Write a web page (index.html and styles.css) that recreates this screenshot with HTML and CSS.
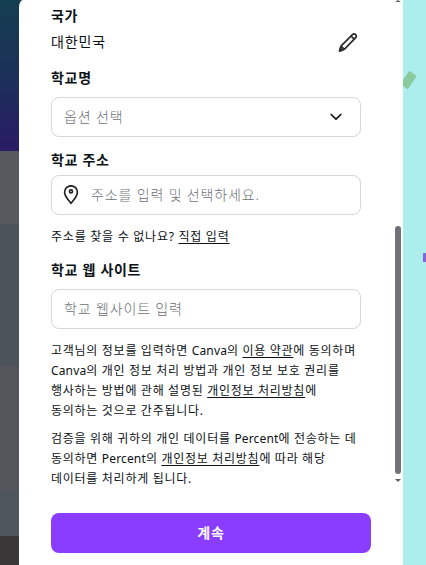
FILE: index.html
```html
<!DOCTYPE html>
<html lang="ko">
<head>
    <meta charset="UTF-8">
    <meta name="viewport" content="width=device-width, initial-scale=1.0">
    <title>학교 정보 입력</title>
    <link rel="stylesheet" href="styles.css">
</head>
<body>
    <div class="backdrop-left"></div>
    <main class="modal">
        <form class="form">
            <div class="label">국가</div>
            <div class="country">
                <span>대한민국</span>
                <svg class="pencil" width="20" height="20" viewBox="0 0 20 20" fill="none" stroke="#2b2b2b" stroke-width="1.7" stroke-linejoin="round">
                    <path d="M1.6 19 3 14.2 14.4 2.6Q16 1.2 17.5 2.5 19 4 17.7 5.7L6.3 17.3ZM13.1 4.1l3.2 3.1M3 14.2l3.3 3.1"/>
                    <path d="M1.6 19 2.3 16.2l2.2 2Z" fill="#2b2b2b"/>
                </svg>
            </div>

            <div class="label">학교명</div>
            <div class="field">
                <span class="placeholder">옵션 선택</span>
                <svg class="chevron" width="12" height="8" viewBox="0 0 12 8" fill="none" stroke="#111" stroke-width="1.7" stroke-linecap="round" stroke-linejoin="round">
                    <path d="M1.2 1.5 6 6.1l4.8-4.6"/>
                </svg>
            </div>

            <div class="label">학교 주소</div>
            <div class="field address">
                <svg class="pin" width="16" height="20" viewBox="0 0 16 20" fill="none" stroke="#222" stroke-width="1.7" stroke-linejoin="round">
                    <path d="M8 18.3C5.8 15.4 1.6 11.4 1.6 7.2a6.4 6.4 0 0 1 12.8 0c0 4.2-4.2 8.2-6.4 11.1Z"/>
                    <circle cx="8" cy="6.4" r="1.5"/>
                </svg>
                <span class="placeholder">주소를 입력 및 선택하세요.</span>
            </div>
            <p class="help">주소를 찾을 수 없나요? <a href="#">직접 입력</a></p>

            <div class="label">학교 웹 사이트</div>
            <div class="field">
                <span class="placeholder">학교 웹사이트 입력</span>
            </div>

            <p>고객님의 정보를 입력하면 <span class="latin">Canva</span>의 <a href="#">이용 약관</a>에 동의하며<br>
                <span class="latin">Canva</span>의 개인 정보 처리 방법과 개인 정보 보호 권리를<br>
                행사하는 방법에 관해 설명된 <a href="#">개인정보 처리방침</a>에<br>
                동의하는 것으로 간주됩니다.</p>
            <p class="percent">검증을 위해 귀하의 개인 데이터를 <span class="latin">Percent</span>에 전송하는 데<br>
                동의하면 <span class="latin">Percent</span>의 <a href="#">개인정보 처리방침</a>에 따라 해당<br>
                데이터를 처리하게 됩니다.</p>

            <button type="button" class="submit">계속</button>
        </form>
        <div class="scrollbar">
            <span class="arrow up"></span>
            <span class="thumb"></span>
            <span class="arrow down"></span>
        </div>
    </main>
    <div class="backdrop-right">
        <span class="confetti green"></span>
        <span class="confetti purple"></span>
    </div>
</body>
</html>
```
FILE: styles.css
```css
body {
    margin: 0;
    height: 565px;
    overflow: hidden;
    display: grid;
    grid-template-columns: 19px 384px 23px;
    font-family: "Noto Sans", "Noto Sans CJK KR", sans-serif;
    color: #0d1216;
}
.backdrop-left {
    margin-right: -6px;
    background: linear-gradient(#153e51 0, #1b3158 70px, #2a1b66 151px,
        #56595e 151px 224px, #4c5359 224px 366px,
        #54565b 366px 492px, #4e565b 492px 536px, #393737 536px);
}
.modal {
    position: relative;
    background: #fff;
    border-top-left-radius: 4px 8px;
}
.form {
    padding: 5px 32px 0;
}
.label {
    margin-top: 12px;
    font-size: 14px;
    font-weight: 700;
    line-height: 22px;
    letter-spacing: 0.7px;
}
.label:first-child {
    margin-top: 0;
}
.country {
    display: flex;
    align-items: center;
    justify-content: space-between;
    width: 307px;
    height: 30px;
    font-size: 14px;
    line-height: 20px;
    letter-spacing: 0.9px;
}
.country span {
    padding-bottom: 1px;
}
.country + .label {
    margin-top: 10px;
}
.field {
    box-sizing: border-box;
    display: flex;
    align-items: center;
    width: 310px;
    height: 40px;
    margin-top: 8px;
    padding: 0 18px 0 12px;
    border: 1px solid #d5d7da;
    border-radius: 8px;
}
.address {
    margin-top: 4px;
    padding-left: 11px;
}
.pin {
    margin-right: 12px;
}
.chevron {
    margin-left: auto;
}
.placeholder {
    color: #6c7074;
    font-size: 14px;
    font-weight: 300;
    line-height: 20px;
    letter-spacing: 0.85px;
}
p {
    margin: 12px 0 0;
    font-size: 12px;
    line-height: 20px;
    letter-spacing: 0.75px;
    word-spacing: -0.2px;
    white-space: nowrap;
}
.help {
    letter-spacing: 0.8px;
}
.latin {
    letter-spacing: 0.15px;
}
.percent {
    margin-top: 8px;
}
a {
    color: inherit;
    text-underline-offset: 2px;
}
.submit {
    display: block;
    width: 320px;
    height: 40px;
    margin-top: 24px;
    padding: 0 0 2px;
    border: none;
    border-radius: 8px;
    background: #8b3dff;
    color: #fff;
    font: inherit;
    font-size: 14px;
    font-weight: 700;
    letter-spacing: 0.8px;
}
.scrollbar {
    position: absolute;
    top: 0;
    right: 2px;
    width: 6px;
    height: 483px;
    display: flex;
    flex-direction: column;
    align-items: center;
}
.arrow {
    border: 3px solid transparent;
    border-top: 0;
    border-bottom: 0;
}
.up {
    height: 0;
    border-bottom: 2px solid #606167;
}
.thumb {
    width: 6px;
    height: 248px;
    margin: 224px 0 5px;
    border-radius: 3px;
    background: #717278;
}
.down {
    border-top: 3px solid #606167;
}
.backdrop-right {
    position: relative;
    overflow: hidden;
    background: #abeeeb;
}
.confetti {
    position: absolute;
}
.green {
    top: 72px;
    left: 1px;
    width: 9px;
    height: 16px;
    background: #8aca9f;
    transform: rotate(34deg);
}
.purple {
    top: 253px;
    left: 20px;
    width: 4px;
    height: 9px;
    background: #8465da;
}
```
